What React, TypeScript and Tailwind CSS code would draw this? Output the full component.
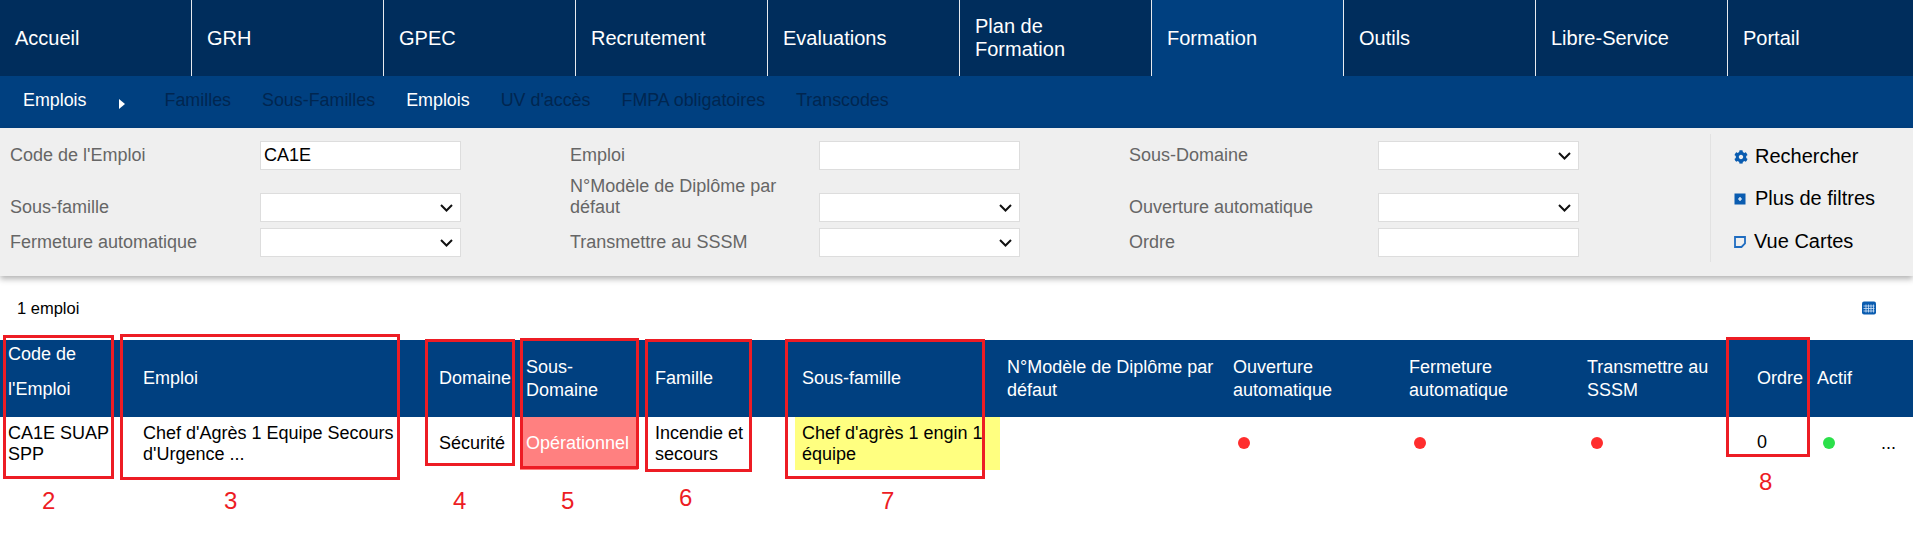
import { FaCog } from "react-icons/fa";

const menu = ["Accueil", "GRH", "GPEC", "Recrutement", "Evaluations", "Plan de Formation", "Formation", "Outils", "Libre-Service", "Portail"];

function Field({ label, value }: { label: string; value?: string }) {
  return (
    <>
      <label className="pb-[4px] pr-[30px] text-[18px] leading-[21px] text-[#666]">{label}</label>
      <input
        readOnly
        value={value ?? ""}
        className="h-[29px] w-[201px] border border-[#ddd] bg-white px-[3px] text-[18px] text-black outline-none"
      />
    </>
  );
}

function Choice({ label }: { label: string }) {
  return (
    <>
      <label className="pb-[4px] pr-[30px] text-[18px] leading-[21px] text-[#666]">{label}</label>
      <div className="relative h-[29px] w-[201px]">
        <select className="h-full w-full appearance-none border border-[#ddd] bg-white text-black outline-none">
          <option></option>
        </select>
        <svg viewBox="0 0 13 8" className="pointer-events-none absolute right-[8px] top-[11px] h-[8px] w-[13px]" fill="none" stroke="#111" strokeWidth="2">
          <path d="M1 1l5.5 5.5L12 1" />
        </svg>
      </div>
    </>
  );
}

function Dot({ color }: { color: string }) {
  return <span className={`block size-[12px] -translate-y-[1px] rounded-full ${color}`} />;
}

export default function App() {
  return (
    <div className="min-h-[540px] overflow-hidden bg-white font-['Liberation_Sans',Arial,sans-serif] text-black">
      <nav className="flex h-[76px] bg-[#002d5c] text-white">
        {menu.map((item, i) => (
          <div
            key={item}
            className={`flex items-center border-r border-white/90 pl-[15px] pr-[30px] text-[20px] leading-[23px] ${
              i === 6 ? "bg-[#004080]" : ""
            } ${i === 9 ? "flex-1 border-r-0" : "w-[192px]"}`}
          >
            {item}
          </div>
        ))}
      </nav>

      <div className="flex h-[52px] items-center bg-[#004080] pb-[3px] pl-[23px] text-[17.87px] text-[#002650]">
        <span className="text-white">Emplois</span>
        <span className="ml-[32px] mt-[7px] h-0 w-0 border-y-[5px] border-l-[6px] border-y-transparent border-l-white" />
        <div className="ml-[40px] flex gap-[31px]">
          <span>Familles</span>
          <span>Sous-Familles</span>
          <span className="text-white">Emplois</span>
          <span>UV d'accès</span>
          <span>FMPA obligatoires</span>
          <span>Transcodes</span>
        </div>
      </div>

      <section className="relative z-10 flex h-[148px] bg-[#efefef] shadow-[0_3px_6px_rgba(0,0,0,0.3)]">
        <div className="grid w-[1710px] shrink-0 grid-cols-[250px_201px_249px_201px_249px_201px] grid-rows-[29px_46px_29px] items-end gap-y-[6px] pl-[10px] pt-[13px]">
          <Field label="Code de l'Emploi" value="CA1E" />
          <div className="col-span-2 ml-[109px] grid grid-cols-[249px_201px] items-end">
            <Field label="Emploi" />
          </div>
          <div className="col-span-2 ml-[218px] grid grid-cols-[249px_201px] items-end">
            <Choice label="Sous-Domaine" />
          </div>
          <Choice label="Sous-famille" />
          <div className="col-span-2 ml-[109px] grid grid-cols-[249px_201px] items-end">
            <Choice label="N°Modèle de Diplôme par défaut" />
          </div>
          <div className="col-span-2 ml-[218px] grid grid-cols-[249px_201px] items-end">
            <Choice label="Ouverture automatique" />
          </div>
          <Choice label="Fermeture automatique" />
          <div className="col-span-2 ml-[109px] grid grid-cols-[249px_201px] items-end">
            <Choice label="Transmettre au SSSM" />
          </div>
          <div className="col-span-2 ml-[218px] grid grid-cols-[249px_201px] items-end">
            <Field label="Ordre" />
          </div>
        </div>
        <div className="mt-[6px] flex h-[128px] flex-col gap-[19px] border-l border-[#e2e2e2] pl-[23px] pt-[11px] text-[20px] leading-[23px]">
          <div className="flex items-center gap-[7px]">
            <FaCog className="size-[14px] text-[#0a5cb0]" />
            <span>Rechercher</span>
          </div>
          <div className="flex items-center gap-[9px]">
            <svg viewBox="0 0 12 12" className="size-[12px]">
              <rect width="11" height="11" x="0.5" y="0.5" fill="#0a5cb0" />
              <path d="M6 4v4M4 6h4" stroke="#fff" strokeWidth="1.2" />
            </svg>
            <span>Plus de filtres</span>
          </div>
          <div className="mt-[1px] flex items-center gap-[8px]">
            <svg viewBox="0 0 12 12" className="size-[12px]" fill="none" stroke="#1f6cc0" strokeWidth="1.8">
              <path d="M1 1h10v6.5L7.5 11H1z" />
            </svg>
            <span>Vue Cartes</span>
          </div>
        </div>
      </section>

      <div className="flex h-[64px] items-center justify-between pl-[17px] pr-[37px] text-[16.5px]">
        <span>1 emploi</span>
        <svg viewBox="0 0 14 14" className="size-[14px]">
          <rect width="14" height="13" y="0.5" rx="2" fill="#0a5cb0" />
          <path d="M1.5 5h11M1.5 7.5h11M1.5 10h11M4 3.5v8M6.5 3.5v8M9 3.5v8M11.5 3.5v8" stroke="#cfe2f7" strokeWidth="0.8" />
        </svg>
      </div>

      <div className="relative">
        <table className="w-[1913px] table-fixed border-collapse text-[18px] leading-[21px]">
          <colgroup>
            <col className="w-[135px]" />
            <col className="w-[296px]" />
            <col className="w-[89px]" />
            <col className="w-[118px]" />
            <col className="w-[157px]" />
            <col className="w-[205px]" />
            <col className="w-[226px]" />
            <col className="w-[176px]" />
            <col className="w-[178px]" />
            <col className="w-[170px]" />
            <col className="w-[60px]" />
            <col className="w-[50px]" />
            <col className="w-[53px]" />
          </colgroup>
          <thead className="bg-[#004080] text-left text-[18px] leading-[23px] text-white">
            <tr className="h-[77px]">
              <th className="pl-[8px] font-normal">
                <div className="-mt-[14px] leading-[35px]">Code de l'Emploi</div>
              </th>
              <th className="pl-[8px] font-normal">Emploi</th>
              <th className="pl-[8px] font-normal">Domaine</th>
              <th className="pl-[6px] font-normal">Sous-Domaine</th>
              <th className="pl-[17px] font-normal">Famille</th>
              <th className="pl-[7px] font-normal">Sous-famille</th>
              <th className="pl-[7px] font-normal">N°Modèle de Diplôme par défaut</th>
              <th className="pl-[7px] font-normal">Ouverture automatique</th>
              <th className="pl-[7px] font-normal">Fermeture automatique</th>
              <th className="pl-[7px] pr-[10px] font-normal">Transmettre au SSSM</th>
              <th className="pl-[7px] font-normal">Ordre</th>
              <th className="pl-[7px] font-normal">Actif</th>
              <th></th>
            </tr>
          </thead>
          <tbody>
            <tr className="h-[53px]">
              <td className="pl-[8px]">CA1E SUAP SPP</td>
              <td className="pl-[8px]">Chef d'Agrès 1 Equipe Secours d'Urgence ...</td>
              <td className="pl-[8px]">Sécurité</td>
              <td className="bg-[#ff8080] pl-[6px] text-white">Opérationnel</td>
              <td className="pl-[17px] pr-[30px]">Incendie et secours</td>
              <td className="bg-[#ffff80] pl-[7px]">Chef d'agrès 1 engin 1 équipe</td>
              <td></td>
              <td className="pl-[12px]"><Dot color="bg-[#ff2d2d]" /></td>
              <td className="pl-[12px]"><Dot color="bg-[#ff2d2d]" /></td>
              <td className="pl-[11px]"><Dot color="bg-[#ff2d2d]" /></td>
              <td className="pl-[7px]"><span className="block -translate-y-[1px]">0</span></td>
              <td className="pl-[13px]"><Dot color="bg-[#2be04a]" /></td>
              <td className="pl-[21px]">...</td>
            </tr>
          </tbody>
        </table>

        {/* annotations drawn over the table */}
        <div className="absolute left-[3px] top-[-5px] h-[144px] w-[111px] border-[3px] border-[#ed1c24]" />
        <div className="absolute left-[120px] top-[-6px] h-[146px] w-[280px] border-[3px] border-[#ed1c24]" />
        <div className="absolute left-[425px] top-[-1px] h-[127px] w-[90px] border-[3px] border-[#ed1c24]" />
        <div className="absolute left-[520px] top-[-2px] h-[131px] w-[119px] border-[3px] border-[#ed1c24]" />
        <div className="absolute left-[645px] top-[-1px] h-[133px] w-[107px] border-[3px] border-[#ed1c24]" />
        <div className="absolute left-[785px] top-[-1px] h-[140px] w-[200px] border-[3px] border-[#ed1c24]" />
        <div className="absolute left-[1726px] top-[-3px] h-[120px] w-[84px] border-[3px] border-[#ed1c24]" />

        <span className="absolute left-[42px] top-[147px] text-[24px] leading-[28px] text-[#ed1c24]">2</span>
        <span className="absolute left-[224px] top-[147px] text-[24px] leading-[28px] text-[#ed1c24]">3</span>
        <span className="absolute left-[453px] top-[147px] text-[24px] leading-[28px] text-[#ed1c24]">4</span>
        <span className="absolute left-[561px] top-[147px] text-[24px] leading-[28px] text-[#ed1c24]">5</span>
        <span className="absolute left-[679px] top-[144px] text-[24px] leading-[28px] text-[#ed1c24]">6</span>
        <span className="absolute left-[881px] top-[147px] text-[24px] leading-[28px] text-[#ed1c24]">7</span>
        <span className="absolute left-[1759px] top-[128px] text-[24px] leading-[28px] text-[#ed1c24]">8</span>
      </div>
    </div>
  );
}
